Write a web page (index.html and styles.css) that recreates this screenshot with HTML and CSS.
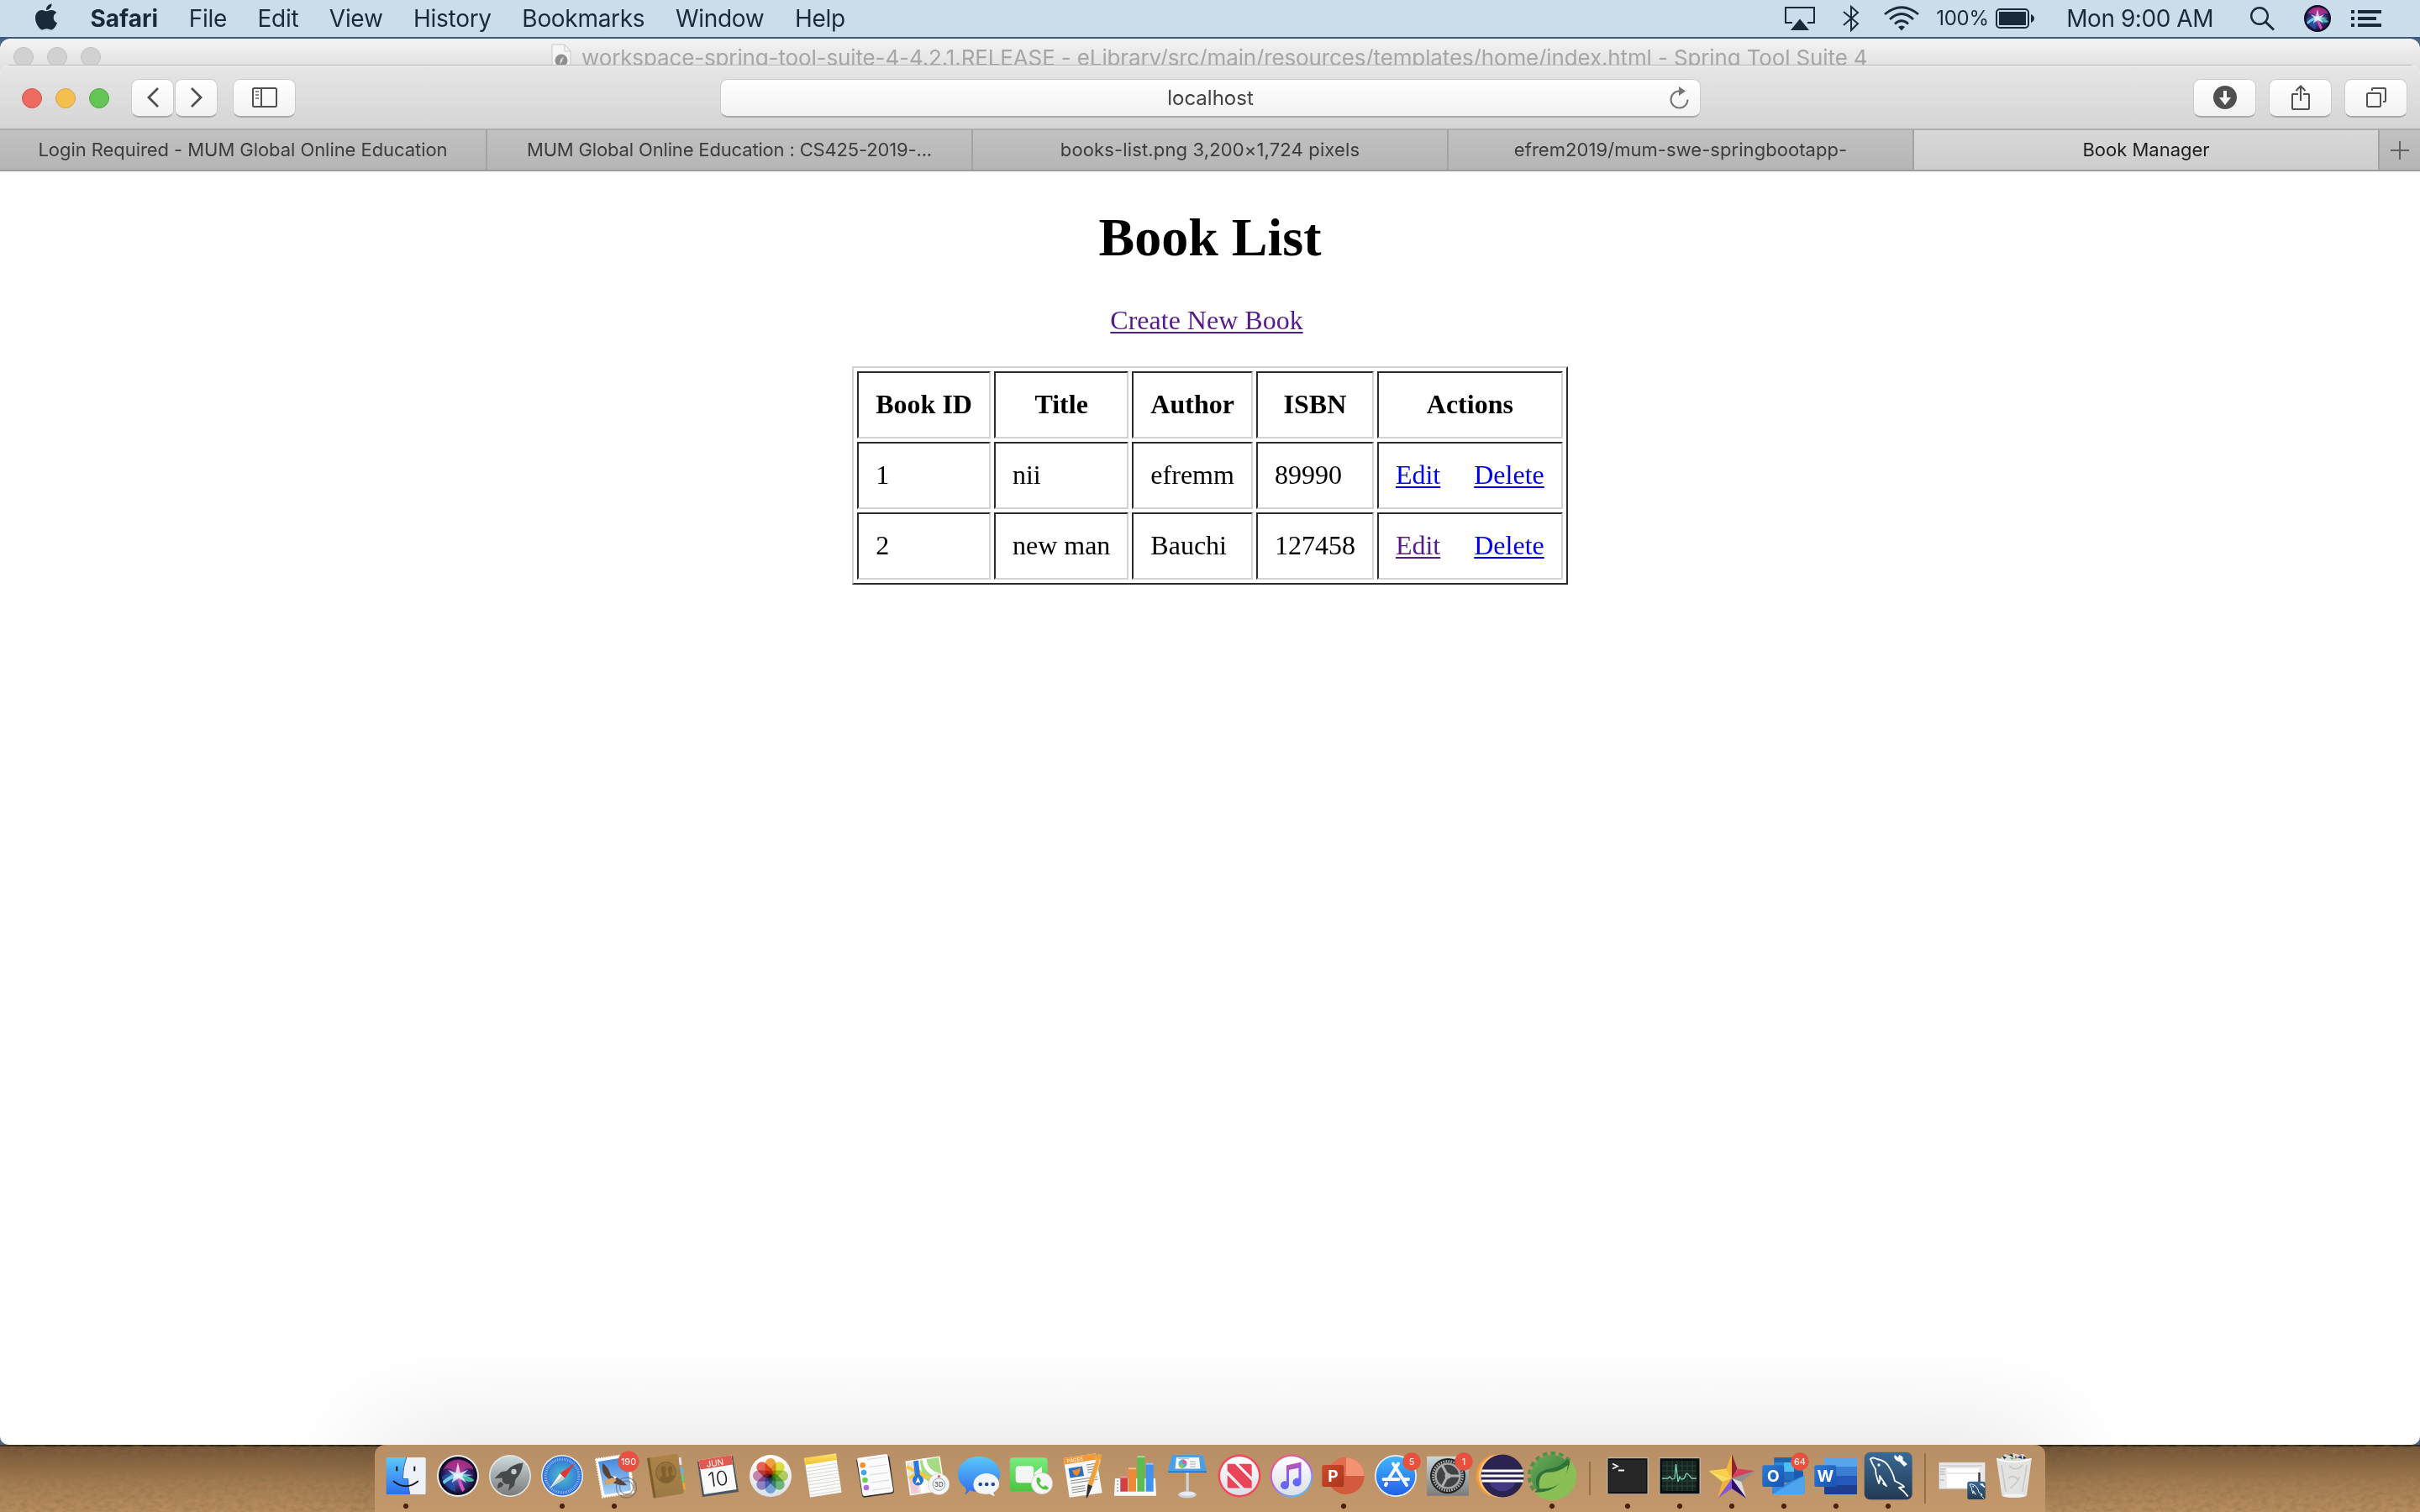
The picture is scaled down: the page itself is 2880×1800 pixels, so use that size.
FILE: index.html
```html
<!DOCTYPE html>
<html lang="en">
<head>
<meta charset="utf-8">
<title>Book Manager</title>
<link rel="stylesheet" href="styles.css">
</head>
<body>
<svg class="defs" width="0" height="0" aria-hidden="true">
  <defs>
    <linearGradient id="blueV" x1="0" y1="0" x2="0" y2="1"><stop offset="0" stop-color="#5bc8f8"/><stop offset="1" stop-color="#2d6df0"/></linearGradient>
    <linearGradient id="blueApp" x1="0" y1="0" x2="0" y2="1"><stop offset="0" stop-color="#3fb8fa"/><stop offset="1" stop-color="#2260ea"/></linearGradient>
    <linearGradient id="whiteV" x1="0" y1="0" x2="0" y2="1"><stop offset="0" stop-color="#fff"/><stop offset="1" stop-color="#dcdfe6"/></linearGradient>
    <linearGradient id="greyV" x1="0" y1="0" x2="0" y2="1"><stop offset="0" stop-color="#cbd9dc"/><stop offset="1" stop-color="#7b7b7b"/></linearGradient>
    <linearGradient id="greenV" x1="0" y1="0" x2="0" y2="1"><stop offset="0" stop-color="#78ec80"/><stop offset="1" stop-color="#4cc43c"/></linearGradient>
    <linearGradient id="tanV" x1="0" y1="0" x2="0" y2="1"><stop offset="0" stop-color="#ad8349"/><stop offset="1" stop-color="#9c7a45"/></linearGradient>
    <linearGradient id="noteV" x1="0" y1="0" x2="0" y2="1"><stop offset="0" stop-color="#fde06b"/><stop offset="1" stop-color="#f3c02c"/></linearGradient>
    <linearGradient id="skyV" x1="0" y1="0" x2="0" y2="1"><stop offset="0" stop-color="#3f86dd"/><stop offset="1" stop-color="#a9d0f5"/></linearGradient>
    <linearGradient id="noteMusic" x1="0" y1="0" x2="0.3" y2="1"><stop offset="0" stop-color="#f0516a"/><stop offset=".5" stop-color="#8a5af0"/><stop offset="1" stop-color="#5a6cf5"/></linearGradient>
    <linearGradient id="ringMusic" x1="0.2" y1="0" x2="0.8" y2="1"><stop offset="0" stop-color="#fa5a6a"/><stop offset=".5" stop-color="#b266e6"/><stop offset="1" stop-color="#4fc6f5"/></linearGradient>
    <linearGradient id="springV" x1="0" y1="0" x2="1" y2="1"><stop offset="0" stop-color="#6aad57"/><stop offset="1" stop-color="#2a6d35"/></linearGradient>
    <linearGradient id="mysqlV" x1="0" y1="0" x2="0" y2="1"><stop offset="0" stop-color="#3b6a96"/><stop offset="1" stop-color="#223b54"/></linearGradient>
    <linearGradient id="pptV" x1="0" y1="0" x2="1" y2="1"><stop offset="0" stop-color="#cb4a2c"/><stop offset="1" stop-color="#a9361c"/></linearGradient>
    <linearGradient id="officeV" x1="0" y1="0" x2="1" y2="1"><stop offset="0" stop-color="#2f7ad6"/><stop offset="1" stop-color="#1554b4"/></linearGradient>
    <radialGradient id="safariR"><stop offset="0" stop-color="#55c3c4"/><stop offset="1" stop-color="#2b6be0"/></radialGradient>
    <radialGradient id="siriR" cx=".5" cy=".5" r=".55"><stop offset="0" stop-color="#9fd8ee"/><stop offset=".3" stop-color="#5a4aa8"/><stop offset=".75" stop-color="#2a1d58"/><stop offset="1" stop-color="#0b0c24"/></radialGradient>
    <symbol id="siri" viewBox="0 0 50 50">
      <circle cx="25" cy="25" r="25" fill="#0c0d25"/>
      <circle cx="25" cy="25" r="22.5" fill="url(#siriR)"/>
      <path d="M6 17Q13 3 28 4Q43 7 45 17Q34 12 26 24Q18 12 6 17z" fill="#c83291" opacity=".75"/>
      <path d="M4 27Q8 41 22 46Q20 34 25 25Q12 18 4 27z" fill="#1d62b8" opacity=".65"/>
      <path d="M25 24Q39 23 46 31Q40 36 25 26z" fill="#41d3ae" opacity=".85"/>
      <path d="M24 25Q26 39 31 46L34 42Q30 35 26 24z" fill="#e35cc0" opacity=".9"/>
      <path d="M5 32Q16 22 25 22L45 24 27 27Q15 28 7 36z" fill="#8ae8ef" opacity=".8"/>
      <path d="M25 7L28 21 38 17 30 25 36 34 26 28 17 34 20 25 12 17 22 21z" fill="#fff" opacity=".75"/>
    </symbol>
    <g id="dolphin" fill="none" stroke="#fff" stroke-linecap="round" stroke-linejoin="round">
      <path d="M10 17Q12 14 18 17Q29 19 33 28Q37 34 39 43Q49 48 50 50L44 51Q51 56 54 61"/>
      <path d="M10 17Q12 23 16 29Q16 35 18 40L20 46Q22 42 21 37Q25 43 29 49L25 46"/>
      <circle cx="20" cy="24" r=".8"/>
    </g>
    <path id="wrench" d="M43 13l4 3 2-3Q55 15 53 19l6 5-4 3-6-6Q43 20 42 15z" fill="#fff"/>
  </defs>
</svg>

<header class="menubar">
  <svg class="apple" viewBox="4 32 376 448"><path fill="#192a3a" d="M318.7 268.7c-.2-36.7 16.4-64.4 50-84.8-18.8-26.9-47.2-41.7-84.7-44.6-35.5-2.8-74.3 20.7-88.5 20.7-15 0-49.4-19.7-76.4-19.7C63.3 141.2 4 184.8 4 273.5q0 39.3 14.4 81.2c12.8 36.7 59 126.7 107.2 125.2 25.2-.6 43-17.9 75.8-17.9 31.8 0 48.3 17.9 76.4 17.9 48.6-.7 90.4-82.5 102.6-119.3-65.2-30.7-61.7-90-61.7-91.9zm-56.6-164.2c27.3-32.4 24.8-61.9 24-72.5-24.1 1.4-52 16.4-67.9 34.9-17.5 19.8-27.8 44.3-25.6 71.9 26.1 2 49.9-11.4 69.5-34.3z"/></svg>
  <nav class="menus">
    <span class="app">Safari</span><span>File</span><span>Edit</span><span>View</span><span>History</span><span>Bookmarks</span><span>Window</span><span>Help</span>
  </nav>
  <div class="status">
    <svg class="airplay" width="36" height="28" viewBox="0 0 36 28"><path d="M9 19H1V1h34v18h-8" fill="none" stroke="#192a3a" stroke-width="2"/><path d="M18 14.5L29 28H7z" fill="#192a3a"/></svg>
    <svg class="bluetooth" width="20" height="32" viewBox="0 0 20 32"><path d="M1 8l17 14-8 8V2l8 7L1 24" fill="none" stroke="#192a3a" stroke-width="2"/></svg>
    <svg class="wifi" width="42" height="30" viewBox="0 0 42 30"><g fill="none" stroke="#192a3a" stroke-width="2.8"><path d="M1 10Q21-6.500 41 10"/><path d="M7 16Q21 3 35 16"/><path d="M13 21.500Q21 14 29 21.500"/></g><path d="M17 25Q21 22 25 25L21 29.500z" fill="#192a3a"/></svg>
    <span class="pct">100%</span>
    <svg class="battery" width="46" height="24" viewBox="0 0 46 24"><rect x="1" y="1" width="38" height="22" rx="4" fill="none" stroke="#192a3a" stroke-width="2"/><rect x="4" y="4" width="32" height="16" fill="#192a3a"/><path d="M42 7q4 2 4 5t-4 5z" fill="#192a3a"/></svg>
    <span class="clock">Mon 9:00 AM</span>
    <svg class="search" width="29" height="29" viewBox="0 0 29 29"><circle cx="11" cy="11" r="9.800" fill="none" stroke="#192a3a" stroke-width="2.400"/><path d="M18 18l10 9.500" stroke="#192a3a" stroke-width="3"/></svg>
    <svg class="siri" width="32" height="32"><use href="#siri"/></svg>
    <svg class="list" width="36" height="20" viewBox="0 0 36 20"><path d="M0 0h4v4H0zM0 8h4v4H0zM0 16h4v4H0zM8 0h28v4H8zM8 8h22v4H8zM8 16h28v4H8z" fill="#192a3a"/></svg>
  </div>
</header>

<main class="desktop">
  <div class="backwin">
    <i></i><i></i><i></i>
    <svg class="doc" width="24" height="32" viewBox="0 0 24 32"><path d="M1 34V1h15l7 8v25" fill="#f5f5f5" stroke="#c8c8c8"/><path d="M16 1v8h7" fill="none" stroke="#c8c8c8"/><circle cx="12" cy="20" r="7.500" fill="#8f8f8f"/><path d="M10 25l1-6 4-4-2 6z" fill="#ddd"/></svg>
    <span class="wtitle">workspace-spring-tool-suite-4-4.2.1.RELEASE - eLibrary/src/main/resources/templates/home/index.html - Spring Tool Suite 4</span>
  </div>

  <section class="window">
    <div class="toolbar">
      <i class="light red"></i><i class="light amber"></i><i class="light green"></i>
      <span class="btn nav back"><svg width="16" height="26" viewBox="0 0 16 26"><path d="M14 2L3 13l11 11" fill="none" stroke="#505050" stroke-width="2.800"/></svg></span>
      <span class="btn nav"><svg width="16" height="26" viewBox="0 0 16 26"><path d="M2 2l11 11L2 24" fill="none" stroke="#505050" stroke-width="2.800"/></svg></span>
      <span class="btn side"><svg width="30" height="24" viewBox="0 0 30 24"><rect x="1" y="1" width="28" height="22" rx="1.500" fill="none" stroke="#505050" stroke-width="2"/><path d="M11 1v22" stroke="#505050" stroke-width="2"/><path d="M4 5h4M4 9h4M4 13h4" stroke="#8a8a8a" stroke-width="2"/></svg></span>
      <div class="address"><span class="host">localhost</span>
        <svg class="reload" width="24" height="28" viewBox="0 0 24 28"><path d="M21.500 15.500A10 10 0 1 1 11 5.500" fill="none" stroke="#757575" stroke-width="2"/><path d="M11 0v11l8-5.500z" fill="#757575"/></svg></div>
      <span class="btn wide first"><svg width="28" height="28" viewBox="0 0 28 28"><circle cx="14" cy="14" r="14" fill="#505050"/><path d="M12 6h4v8h5l-7 9-7-9h5z" fill="#fafafa"/></svg></span>
      <span class="btn wide"><svg width="22" height="30" viewBox="0 0 22 30"><path d="M8 11H1.500q-.5 0-.5.500V28q0 1 1 1h18q1 0 1-1V11.500q0-.5-.5-.5H14M11 19V1.500M5.500 7L11 1.500 16.500 7" fill="none" stroke="#505050" stroke-width="2"/></svg></span>
      <span class="btn wide"><svg width="24" height="24" viewBox="0 0 24 24"><rect x="1" y="7" width="16" height="16" rx="1.500" fill="none" stroke="#505050" stroke-width="2"/><path d="M7 4V2q0-1 1-1h14q1 0 1 1v14q0 1-1 1h-2" fill="none" stroke="#505050" stroke-width="2"/></svg></span>
    </div>
    <div class="tabs">
      <span class="tab t1">Login Required - MUM Global Online Education</span>
      <span class="tab t2">MUM Global Online Education : CS425-2019-...</span>
      <span class="tab t3">books-list.png 3,200×1,724 pixels</span>
      <span class="tab t4">efrem2019/mum-swe-springbootapp-</span>
      <span class="tab active">Book Manager</span>
      <span class="tab plus"><svg width="22" height="22" viewBox="0 0 22 22"><path d="M11 0v22M0 11h22" stroke="#606060" stroke-width="2"/></svg></span>
    </div>
    <article class="page">
      <h1>Book List</h1>
      <p class="create"><a class="visited" href="#">Create New Book</a>&nbsp;</p>
      <table class="books">
        <tr><th>Book ID</th><th>Title</th><th>Author</th><th>ISBN</th><th>Actions</th></tr>
        <tr><td>1</td><td>nii</td><td>efremm</td><td>89990</td><td><a href="#">Edit</a>&nbsp;&nbsp;&nbsp;&nbsp;&nbsp;<a href="#">Delete</a></td></tr>
        <tr><td>2</td><td>new man</td><td>Bauchi</td><td>127458</td><td><a class="visited" href="#">Edit</a>&nbsp;&nbsp;&nbsp;&nbsp;&nbsp;<a href="#">Delete</a></td></tr>
      </table>
    </article>
  </section>

  <footer class="shelf">
    <svg class="sand" width="2880" height="80"><filter id="grain" x="0" y="0" width="1" height="1"><feTurbulence type="fractalNoise" baseFrequency=".12 .2" numOctaves="3"/><feColorMatrix values="0 0 0 0 .25  0 0 0 0 .15  0 0 0 0 .05  .9 0 0 0 -.32"/></filter><rect width="2880" height="80" filter="url(#grain)"/></svg>
    <div class="dock">
      <svg class="ic run" viewBox="0 0 62 80"><rect x="7.700" y="15" width="47" height="44" rx="1.500" fill="url(#blueV)"/><path d="M31.700 15Q27.500 26 27.300 40.500H33.700Q33.500 50 35.700 59H53.200a1.500 1.500 0 0 0 1.500-1.500V16.500a1.500 1.500 0 0 0-1.500-1.500z" fill="#eef1f8"/><path d="M31.700 15Q27.500 26 27.300 40.500H33.700Q33.500 50 35.700 59" fill="none" stroke="#1c4f8c" stroke-width=".8"/><path d="M20.300 26.500v4M41.300 26.500v4" stroke="#10151c" stroke-width="2" stroke-linecap="round"/><path d="M16.500 43.500Q31 55 45.300 43.500" fill="none" stroke="#10151c" stroke-width="1.700" stroke-linecap="round"/></svg>
      <svg class="ic" viewBox="0 0 62 80"><circle cx="31" cy="37" r="25" fill="#eceef0"/><use href="#siri" x="8" y="14" width="46" height="46"/></svg>
      <svg class="ic" viewBox="0 0 62 80"><circle cx="31" cy="37" r="25" fill="#e4e8e9"/><circle cx="31" cy="37" r="23.500" fill="url(#greyV)"/><path d="M46.500 21.500Q34 22.500 27 31L20 32.500 12.500 40 21.500 39.500 22 44 26 47 30.500 46.500 29 55 36 48.500 37.500 41Q45 34 46.500 21.500z" fill="#46484b"/><circle cx="35.500" cy="32" r="3.200" fill="#c3cbcd"/><path d="M19.500 44Q16 46 16 52Q21 51 23.500 47" fill="#46484b"/></svg>
      <svg class="ic run" viewBox="0 0 62 80"><circle cx="31" cy="37" r="25" fill="#eef0f2"/><circle cx="31" cy="37" r="23.500" fill="url(#safariR)"/><circle cx="31" cy="37" r="20" fill="none" stroke="#e7f2fb" stroke-width="3.400" stroke-dasharray=".7 1.390" opacity=".7"/><path d="M46 22L34 40 28.500 34z" fill="#e8332f"/><path d="M16 52L28.500 34 34 40z" fill="#f3f5f6"/><path d="M16 52L31 37l3 3z" fill="#c5cacc"/></svg>
      <svg class="ic run" viewBox="0 0 62 80"><path d="M9 17L48.500 11 54 57 17 62.500z" fill="#fff" stroke="#fff" stroke-width="2" stroke-dasharray="1.800 1.200"/><path d="M12 20L46 14.500 51 54.500 19.500 59.500z" fill="url(#skyV)"/><path d="M17 22Q24 26 27 37Q40 40 46 48Q35 49 28 44L20 46 24 40Q15 34 17 22z" fill="#5c4030"/><path d="M20 42l9-3 5 3-5 4-8 2z" fill="#d3a566"/><path d="M29 37l5 1-2 3z" fill="#fff"/><g fill="none" stroke="#57626f" stroke-width="1.300" opacity=".6"><circle cx="45.500" cy="51" r="12"/><circle cx="45.500" cy="51" r="8"/></g><circle cx="48" cy="20" r="12.500" fill="#e8503f"/><text class="badge" x="48" y="23.800">190</text></svg>
      <svg class="ic" viewBox="0 0 62 80"><path d="M46 15h2.500l1 9H46z" fill="#e5e5e5"/><path d="M47 26h3l1.500 8H47z" fill="#5fb8e8"/><path d="M48 35h3.500l1 9H49z" fill="#65cf73"/><path d="M49 45h4l1 8H49z" fill="#f3a32b"/><path d="M8 16L42 10.700Q44.500 10.500 45 13L51.500 55Q52 57.500 49 58.500L18 63.500Q15.500 64 15 61z" fill="url(#tanV)"/><path d="M8 16l3-.5L18.500 62.500 16 63.500z" fill="#7b5c2d"/><ellipse cx="30.500" cy="33" rx="12" ry="12.500" fill="#99733c" stroke="#7f5f31"/><path d="M22 40Q27 38 26 34Q22 26 28 25Q32 26 30 34L31 38Q35 39 34 34Q31 26 36 25Q40 27 37 33Q36 36 41 37Q36 45 31 45Q25 45 22 40z" fill="#826130"/></svg>
      <svg class="ic" viewBox="0 0 62 80"><path d="M6 20L48 13 55 56 12 62z" fill="#4b5660"/><path d="M7.500 18.500L46.300 12.300 52.500 53 14 59z" fill="#fafafa"/><path d="M7.500 18.500L46.300 12.300 48 23.500 9.500 29.500z" fill="#e2594f"/><g transform="rotate(-8 30 37)" text-anchor="middle"><text class="calm" x="29" y="25">JUN</text><text class="cald" x="30" y="49">10</text></g></svg>
      <svg class="ic" viewBox="0 0 62 80"><circle cx="31" cy="37" r="25" fill="url(#whiteV)"/><g class="petals"><rect x="24.500" y="16" width="13" height="22" rx="6.500" fill="#f49a2e"/><rect x="24.500" y="16" width="13" height="22" rx="6.500" fill="#e6e02f" transform="rotate(45 31 37)"/><rect x="24.500" y="16" width="13" height="22" rx="6.500" fill="#b5d653" transform="rotate(90 31 37)"/><rect x="24.500" y="16" width="13" height="22" rx="6.500" fill="#6dc07d" transform="rotate(135 31 37)"/><rect x="24.500" y="16" width="13" height="22" rx="6.500" fill="#74aee8" transform="rotate(180 31 37)"/><rect x="24.500" y="16" width="13" height="22" rx="6.500" fill="#9382cc" transform="rotate(225 31 37)"/><rect x="24.500" y="16" width="13" height="22" rx="6.500" fill="#cf7fac" transform="rotate(270 31 37)"/><rect x="24.500" y="16" width="13" height="22" rx="6.500" fill="#ee5548" transform="rotate(315 31 37)"/></g></svg>
      <svg class="ic" viewBox="0 0 62 80"><path d="M9 17L47 11.500 54 57 15.700 63z" fill="#fbfbf9" stroke="#a98a60" stroke-width=".6"/><path d="M8.700 15.700L47 10.300 48.200 18 10 24z" fill="url(#noteV)"/><path d="M11 28l38-6M11.500 32l38-6M12 36l38-6M12.700 40l38-6M13.300 44l38-6M14 48l38-6M14.500 52l38-6M15 56l38-6M15.700 60l37.500-6" stroke="#cfcfcf" stroke-width=".8"/></svg>
      <svg class="ic" viewBox="0 0 62 80"><path d="M9 18L46 13Q48 13 48.500 15L54 55Q54 57 52 58L19 62.700Q16.500 63 16 60z" fill="#2e2e2e"/><path d="M10 17Q10 16 12 15.500L44 11Q46 11 46.500 13L53 54Q53 56 51 56.500L19 61Q17 61 16.500 59z" fill="#fbfbfb"/><path d="M22 17.500l22-3M23.500 26.500l22-3M25 36l22-3M26.500 45l22-3M28 54l22-3" stroke="#d8d8d8"/><circle cx="16.700" cy="24.300" r="3.300" fill="#f28e2c"/><circle cx="18" cy="33" r="3.300" fill="#41a5f0"/><circle cx="19.500" cy="42" r="3.300" fill="#6bd04a"/><circle cx="21" cy="51" r="3.300" fill="#b36bdb"/></svg>
      <svg class="ic" viewBox="0 0 62 80"><path d="M5.300 19.500L46.500 13.500 53 54 11 60.500z" fill="#faf8f2"/><path d="M7 21L21 19 27 57 12.500 59z" fill="#e9e5db"/><path d="M20 19L45 15 50 44 45 52 22 36z" fill="#a6db83"/><path d="M28 16Q29 34 49 37M20 18l7 40" fill="none" stroke="#fff" stroke-width="5"/><path d="M7 26L30 38 50 44M10 40L24 31" stroke="#f8c73d" stroke-width="4" fill="none"/><path d="M10 40l10 5 1 12-8 1z" fill="#f1c8d3"/><path d="M15 19.500l6-1 2 19h-6z" fill="#2f79dc"/><circle cx="20.500" cy="42" r="6.500" fill="#2676d5"/><path d="M20.500 38l3 8-3-2-3 2z" fill="#fff"/><circle cx="45.300" cy="47" r="12.500" fill="#f7f7f7" stroke="#c9c9c9" stroke-width=".6"/><circle cx="45.300" cy="47" r="7.300" fill="none" stroke="#79a7c4"/><circle cx="45.300" cy="37.500" r="1.300" fill="#e22"/><text class="tiny" x="45.300" y="49.800">3D</text></svg>
      <svg class="ic" viewBox="0 0 62 80"><path d="M31 14C45 14 56 23 56 35S45 56 31 56Q24 56 20 54Q18 58 14 59Q17 55 15 51Q6 45 6 35C6 23 17 14 31 14z" fill="url(#blueV)"/><path d="M40 34C48 34 55 39 55 46.500Q55 53 48 57L50 61Q46 60 44 58.500Q24 60 24.500 46.500C25 39 32 34 40 34z" fill="#f2f6fb"/><g fill="#1d4e98"><circle cx="32.700" cy="47" r="2.300"/><circle cx="40.200" cy="47" r="2.300"/><circle cx="47.800" cy="47" r="2.300"/></g></svg>
      <svg class="ic" viewBox="0 0 62 80"><rect x="5.700" y="15.300" width="45" height="40" rx="4" fill="url(#greenV)"/><rect x="12.700" y="25.300" width="21.500" height="20" rx="4" fill="#f3f6f3"/><path d="M35 33L44 26v18l-9-6z" fill="#f3f6f3"/><circle cx="44" cy="46" r="12.700" fill="#f5f5f5" stroke="#b8c7b4" stroke-width=".5"/><path d="M38 39l3 0 2 4-2 2Q42 49 46 50l2-2 4 3-1 2Q46 55 41 50T38 39z" fill="#55c548"/></svg>
      <svg class="ic" viewBox="0 0 62 80"><path d="M7.700 16L46 10.300 53.700 57.300 14.700 62.700z" fill="#f7f7f5"/><path d="M7.700 16L46 10.300 47 17.500 9 23.500z" fill="#f19a38"/><text class="pages" x="12" y="21.500" transform="rotate(-8 12 21)">PAGES</text><path d="M13.500 28L30 25.500 32 37 15.500 39.500z" fill="#2c6ec4"/><path d="M18 30q5 1 10-3-1 9-5 10-4-2-5-7z" fill="#f38a1e"/><path d="M35 24l10-1.500M35.500 27l10-1.500M36 30l10-1.500M36.500 33l10-1.500M16 43l32-5M16.500 46l32-5M17 51l16-2.500M17.500 54l16-2.500M18 57l16-2.500" stroke="#888" stroke-width="1"/><path d="M49 10.500l4.500 1.300L42 49l-5.500-2z" fill="#f0a23a"/><path d="M49.500 18l2 .7-8 27" fill="none" stroke="#fbd28d"/><path d="M36.500 47l5.500 2-5.500 13-2 2z" fill="#2d2d2d"/></svg>
      <svg class="ic" viewBox="0 0 62 80"><path d="M7 40h48l1 20.700H6z" fill="#f8f8f8"/><path d="M9 43h2M9 47h2M9 51h2M9 55h2" stroke="#777"/><rect x="13.300" y="37.700" width="9" height="18" fill="#d24045"/><rect x="23" y="27.300" width="9" height="28.400" fill="#ee8a35"/><rect x="33.300" y="13.300" width="9" height="42.400" fill="#5dbb50"/><rect x="43.700" y="21.700" width="9" height="34" fill="#3d93ee"/><path d="M13.300 38.500h9M23 28.300h9M33.300 14.300h9M43.700 22.700h9" stroke="#fff" stroke-opacity=".45" stroke-width="2"/></svg>
      <svg class="ic" viewBox="0 0 62 80"><rect x="29.500" y="32" width="3.200" height="27" fill="#cfd4da"/><ellipse cx="31" cy="59.300" rx="11" ry="4" fill="#c9d1db"/><ellipse cx="31" cy="58.300" rx="9" ry="2.500" fill="#e8ecf1"/><path d="M13 12.300h36.500L54 31.500H8z" fill="#4a9fe9"/><path d="M8 31.500h46v1.500H8z" fill="#2a6cb8"/><path d="M18 15h27l1.500 13.500H16.500z" fill="#f6f8fa"/><circle cx="25.500" cy="22.500" r="5" fill="#47b5e4"/><path d="M25.500 22.500v-5a5 5 0 0 1 5 5z" fill="#dd5c94"/><path d="M25.500 22.500l-5 1a5 5 0 0 0 7 4z" fill="#8ac645"/><path d="M20 16.300h13M34 20h7M34 23h7M34 26h7" stroke="#999" stroke-width=".8"/></svg>
      <svg class="ic" viewBox="0 0 62 80"><circle cx="31" cy="37" r="25.500" fill="#f04a5c"/><circle cx="31" cy="37" r="23" fill="url(#whiteV)"/><path d="M16.700 22.700h9L45.700 43v8.500h-9L16.700 31z" fill="#e9455a"/><path d="M30 22.700h13.700a2 2 0 0 1 2 2V38.500zM16.700 36L32 51.500H18.700a2 2 0 0 1-2-2z" fill="#e9455a"/></svg>
      <svg class="ic" viewBox="0 0 62 80"><circle cx="31" cy="37" r="25.500" fill="url(#ringMusic)"/><circle cx="31" cy="37" r="23.300" fill="url(#whiteV)"/><path d="M25 24.500L42.500 20.500V44A5 5 0 1 1 39.500 40V27.500L28 30V47.500A5 5 0 1 1 25 43.500z" fill="url(#noteMusic)"/></svg>
      <svg class="ic run" viewBox="0 0 62 80"><circle cx="33.700" cy="37" r="22" fill="#d35a3c"/><path d="M33.700 15a22 22 0 0 1 22 22h-22z" fill="#f39272"/><path d="M33.700 15v22h-22a22 22 0 0 1 22-22z" fill="#e26d4c"/><rect x="5.300" y="24" width="26" height="26" rx="2" fill="url(#pptV)"/><text class="office" x="18.300" y="44">P</text></svg>
      <svg class="ic" viewBox="0 0 62 80"><circle cx="31" cy="37" r="25" fill="#eceff2"/><circle cx="31" cy="37" r="23.300" fill="url(#blueApp)"/><path d="M28 22.500L44 48M34 22.500L22.500 41M16.500 41h18M39.500 41H46M20 46l-1 2" fill="none" stroke="#f3f8fd" stroke-width="4" stroke-linecap="round"/><circle cx="50" cy="20" r="10.700" fill="#e8503f"/><text class="badge" x="50" y="23.800">5</text></svg>
      <svg class="ic" viewBox="0 0 62 80"><rect x="6" y="13.700" width="50" height="47" rx="1" fill="url(#greyV)"/><circle cx="31" cy="37" r="21" fill="#1f2022"/><circle cx="31" cy="37" r="17.500" fill="none" stroke="#a4a6a8" stroke-width="3" stroke-dasharray="1.800 1.250"/><circle cx="31" cy="37" r="14.500" fill="#404244" stroke="#a4a6a8" stroke-width="2.600"/><path d="M31 37L24 24M31 37h15M31 37L24 50" stroke="#b0b0b0" stroke-width="3"/><circle cx="31" cy="37" r="3.500" fill="#b0b0b0"/><circle cx="50" cy="20" r="10.700" fill="#e8503f"/><text class="badge" x="50" y="23.800">1</text></svg>
      <svg class="ic" viewBox="0 0 62 80"><circle cx="28" cy="37" r="25.500" fill="#f39a38"/><circle cx="31" cy="37" r="25.500" fill="#f7c07a"/><circle cx="34" cy="37" r="25.500" fill="#2b2350"/><path d="M18 44a17 17 0 0 0 32 0z" fill="#423780"/><path d="M9.300 31h49.500M8.500 37h51M9.300 43h49.500" stroke="#fff" stroke-width="2.900"/></svg>
      <svg class="ic run" viewBox="0 0 62 80"><circle cx="31" cy="37" r="25" fill="url(#springV)"/><path d="M52 19A27 27 0 0 0 11 56" fill="none" stroke="#4f9147" stroke-width="4" stroke-dasharray="5.500 4.200"/><path d="M53 18A28.500 28.500 0 0 1 10 56.500Q44 58 53 18z" fill="#8abf55"/><path d="M10 56.500Q44 58 52.500 20L49 17Q42 26 30 28Q13 31 12 42 11 48 15 52z" fill="#2f713a"/><path d="M16 52Q14 36 24 33Q40 33 50 24Q48 44 33 50Q24 53 16 52z" fill="#8abf55"/></svg>
      <i class="sep s1"></i>
      <svg class="ic run" viewBox="0 0 62 80"><rect x="6.300" y="15" width="49.500" height="44" rx="1.500" fill="#b9b6b0"/><rect x="7.500" y="16.200" width="47" height="42" fill="#111"/><rect x="9" y="18" width="44" height="38" fill="#262626"/><path d="M13 22.500l6 3-6 3M20 30.500h7" fill="none" stroke="#f4f4f4" stroke-width="1.800"/></svg>
      <svg class="ic run" viewBox="0 0 62 80"><rect x="6.300" y="15" width="49.500" height="44" rx="1.500" fill="#b9b6b0"/><rect x="7.500" y="16.200" width="47" height="42" fill="#0c0d0d"/><rect x="10" y="19" width="41" height="36" fill="#17251f"/><path d="M10 25h41M10 31h41M10 37h41M10 43h41M10 49h41M16 19v36M22 19v36M28 19v36M34 19v36M40 19v36M46 19v36" stroke="#2f5146" stroke-width=".7"/><path d="M10 40h7l2-2 3 3 3-1 1.500-17L29 44l2-6 2 3q4 0 5-5t7 4l6 0" fill="none" stroke="#7fd2b6" stroke-width="1.300"/></svg>
      <svg class="ic run" viewBox="0 0 62 80"><path d="M31 10.700L24.500 28.500 31 40z" fill="#f5b83b"/><path d="M31 10.700L37.500 28.500 31 40z" fill="#8e2138"/><path d="M58.700 31L37.500 28.500 31 40z" fill="#d9405c"/><path d="M58.700 31L42.300 44 31 40z" fill="#8f8f8f"/><path d="M48.300 63.700L42.300 44 31 40z" fill="#dcdcdc"/><path d="M48.300 63.700L31 52V40z" fill="#2a0a6c"/><path d="M14 63.700L31 52V40z" fill="#8257d8"/><path d="M14 63.700L19.700 44 31 40z" fill="#f0b237"/><path d="M3.300 31L19.700 44 31 40z" fill="#fbdc62"/><path d="M3.300 31L24.500 28.500 31 40z" fill="#fbcf4c"/></svg>
      <svg class="ic run" viewBox="0 0 62 80"><rect x="19.300" y="15" width="34" height="30" rx="1" fill="#1f66b0"/><path d="M19.300 21h12v11h-12z" fill="#2a8ae0"/><path d="M31 21h12v11H31z" fill="#4fc0f2"/><path d="M31 32h12v10H31z" fill="#2370c2"/><path d="M43 32h11v10H43z" fill="#1b5cae"/><path d="M17 36l14 11 24.500-10.500V57a2 2 0 0 1-2 2H19a2 2 0 0 1-2-2z" fill="#3788e0"/><path d="M17 59L55.500 36.500V57a2 2 0 0 1-2 2z" fill="#4ea5ee"/><rect x="5.300" y="24.300" width="26" height="25.700" rx="2" fill="url(#officeV)"/><text class="office" x="18.300" y="44">O</text><circle cx="50" cy="20" r="10.700" fill="#e8503f"/><text class="badge" x="50" y="23.800">64</text></svg>
      <svg class="ic run" viewBox="0 0 62 80"><rect x="17" y="15" width="39" height="44" rx="1.500" fill="#5aa4ec"/><path d="M17 26h39v11H17z" fill="#3c7dd4"/><path d="M17 37h39v11H17z" fill="#2659bb"/><path d="M17 48h39v9.500a1.500 1.500 0 0 1-1.500 1.500h-36a1.500 1.500 0 0 1-1.500-1.500z" fill="#1b3f8e"/><rect x="5.300" y="24.300" width="26" height="25.700" rx="2" fill="url(#officeV)"/><text class="office" x="18.300" y="44">W</text></svg>
      <svg class="ic run" viewBox="0 0 62 80"><rect x="2.700" y="8.700" width="57" height="56.600" rx="7" fill="url(#mysqlV)"/><use href="#dolphin" stroke-width="1.800"/><use href="#wrench" transform="translate(-1 -1) scale(.93 1)"/></svg>
      <i class="sep s2"></i>
      <svg class="ic" viewBox="0 0 62 80"><rect x="3.700" y="21" width="54.600" height="31.700" fill="#e9e9e9" stroke="#b8b8b8" stroke-width=".5"/><path d="M13 28h38v5H13zM13 35h38v16H13z" fill="#fff"/><path d="M5 25h50" stroke="#bdbdbd"/><path d="M5 29h6M5 32h5M5 35h6M5 42h5" stroke="#aaa"/><path d="M51.500 33v12" stroke="#3c3c3c" stroke-width="2.500"/><rect x="37.300" y="43.700" width="21.500" height="21.300" rx="2.500" fill="url(#mysqlV)"/><g transform="translate(36.500 40.800) scale(.375)"><use href="#dolphin" stroke-width="2.500"/><use href="#wrench"/></g></svg>
      <svg class="ic" viewBox="0 0 62 80"><path d="M14 17l6-6 5 2 5-3 7 2 5-1 6 7-17 4z" fill="#d9dcdd"/><path d="M17 13l5 2-3 2zM25 12l4-1 1 4zM35 15l4-2 2 4zM42 13l4 3-4 1z" fill="#222"/><path d="M26 15l5 1-3 2z" fill="#58b55d"/><path d="M32 13l4 2-4 2z" fill="#d06a48"/><path d="M37 12l4 1-2 2z" fill="#4879c8"/><path d="M10 16.500Q31 24 51.700 16.500L46 60Q45.500 63 31 63T16.300 60z" fill="#e2e2e0"/><path d="M10 16.500Q31 24 51.700 16.500" fill="none" stroke="#fff" stroke-width="1.500"/><path d="M16 24l5 32M46 24l-5 32M25 25q8 8 16-1M24 40q6-6 12 2M26 52q8-6 12-14" fill="none" stroke="#c6c6c4" stroke-width="1.500"/><ellipse cx="31" cy="60.500" rx="13" ry="2" fill="#f3f3f2"/></svg>
    </div>
  </footer>
</main>
</body>
</html>
```
FILE: styles.css
```css
* { box-sizing: border-box; }
html, body { margin: 0; width: 2880px; height: 1800px; overflow: hidden; }
body { display: flex; flex-direction: column; background: #4a6489; font-family: Inter, "Liberation Sans", sans-serif; }
svg { display: block; flex: none; overflow: visible; }
.defs { position: absolute; }

.menubar { display: flex; align-items: center; height: 46px; flex: none; padding: 0 46px 0 42px; background: #cbdceb; border-bottom: 2px solid #3f587f; color: #192a3a; font-size: 28px; line-height: 44px; letter-spacing: -.3px; white-space: nowrap; }
.apple { width: 26px; height: 32px; margin-top: -4px; }
.menus { display: flex; gap: 36.6px; margin-left: 39.5px; }
.app { font-weight: 700; letter-spacing: 0; }
.status { display: flex; align-items: center; margin-left: auto; }
.bluetooth { margin-left: 33px; }
.wifi { margin-left: 29px; }
.pct { margin-left: 20.5px; font-size: 24px; }
.battery { margin-left: 8.5px; }
.clock { margin-left: 38px; letter-spacing: -.45px; }
.search { margin-left: 44px; }
.siri { margin-left: 35px; }
.list { margin-left: 24px; }

.desktop { display: flex; flex-direction: column; flex: 1; min-height: 0; }
.backwin { display: flex; align-items: flex-start; height: 44px; flex: none; padding: 0 0 0 16px; border-radius: 12px 12px 0 0; background: linear-gradient(#f4f4f4, #e2e2e2 32px); }
.backwin i { width: 24px; height: 24px; margin: 10px 16px 0 0; border-radius: 50%; background: #d1d1d1; border: 1px solid #c2c2c2; }
.doc { margin: 6px 0 0 520px; }
.wtitle { margin-left: 12px; font-size: 26px; line-height: 46px; letter-spacing: -.135px; color: #a6a6a6; white-space: nowrap; }

.window { position: relative; display: flex; flex-direction: column; height: 1643px; margin-top: -13px; flex: none; overflow: hidden; border-radius: 12px 12px 10px 10px; background: #fff; }
.toolbar { display: flex; align-items: center; height: 76px; flex: none; padding: 2px 15px 0 26px; border-top: 1px solid #b4b4b4; background: linear-gradient(#e6e6e6, #d5d5d5); box-shadow: inset 0 1px #f4f4f4; }
.light { width: 24px; height: 24px; margin-right: 16px; border-radius: 50%; flex: none; border: 1px solid; }
.red { background: #ee6a5f; border-color: #d9544b; }
.amber { background: #f5bf4f; border-color: #dca23c; }
.green { background: #62c554; border-color: #4fa93f; }
.btn, .address { display: flex; align-items: center; justify-content: center; height: 46px; flex: none; border: 1px solid #cbcbcb; border-bottom: 2px solid #aaa; border-radius: 9px; background: linear-gradient(#fff, #f2f2f2); }
.nav { width: 51px; margin-right: 1px; }
.back { margin-left: 10px; }
.side { width: 75px; margin-left: 17px; }
.address { position: relative; width: 1167px; margin-left: 505px; font-size: 24px; color: #414141; }
.reload { position: absolute; right: 12px; top: 8px; }
.wide { width: 75px; margin-left: 15px; }
.first { margin-left: auto; }

.tabs { display: flex; height: 51px; flex: none; border-top: 2px solid #adadad; border-bottom: 2px solid #9d9d9d; background: linear-gradient(#c1c1c1, #b5b5b5); font-size: 22px; color: #3c3c3c; }
.tab { display: flex; align-items: center; justify-content: center; padding-bottom: 1px; border-right: 2px solid #a3a3a3; white-space: nowrap; }
.t1 { width: 580px; letter-spacing: -.06px; }
.t2 { width: 578px; letter-spacing: -.16px; }
.t3 { width: 566px; letter-spacing: .14px; }
.t4 { width: 554px; letter-spacing: .05px; }
.active { width: 554px; background: linear-gradient(#d8d8d8, #cdcdcd); color: #1e1e1e; }
.plus { flex: 1; padding: 0; border-right: 0; }

.page { flex: 1; font: 32px/36px "Liberation Serif", "Times New Roman", serif; color: #000; }
h1 { margin: 42px 0 43px; font-size: 64px; line-height: 74px; text-align: center; }
.create { margin: 0 0 37px; text-align: center; }
a { color: #0000ee; text-underline-offset: 3px; text-decoration-thickness: 2px; text-decoration-skip-ink: none; }
.visited { color: #551a8b; }
.books { margin: 0 auto; border: 2px solid; border-color: #d3d3d3 #2b2b2b #2b2b2b #d3d3d3; border-collapse: separate; border-spacing: 4px; }
.books th, .books td { height: 80px; padding: 19px 20px 21px; border: 2px solid; border-color: #2b2b2b #d3d3d3 #d3d3d3 #2b2b2b; white-space: nowrap; }

.shelf { position: relative; display: flex; justify-content: center; height: 80px; flex: none; background: linear-gradient(#6c5136, #a37b52 45px, #b98e60); box-shadow: inset 0 2px #2f2418; }
.sand { position: absolute; left: 0; top: 0; overflow: hidden; }
.dock { position: relative; display: flex; width: 1988px; height: 80px; padding: 0 6px; border-radius: 12px 12px 0 0; background: linear-gradient(#b88f66, #c3986b); box-shadow: 0 0 130px rgba(0, 0, 0, .16); }
.ic { width: 62px; height: 80px; }
.run { background: radial-gradient(circle at 31px 73px, #4c1f06 2.6px, transparent 3.6px); }
.sep { position: relative; align-self: center; width: 2px; background: #97703f; flex: none; }
.s1 { height: 40px; margin: 0 13px; }
.s2 { height: 60px; margin: 0 12px; }
.ic text { font-family: Inter, "Liberation Sans", sans-serif; }
.ic .badge { font-size: 11px; fill: #fff; text-anchor: middle; }
.ic .office { font-size: 19px; font-weight: 700; fill: #fff; text-anchor: middle; }
.ic .calm { font-size: 10px; fill: #fff; }
.ic .cald { font-size: 24px; font-weight: 300; fill: #222; }
.ic .tiny { font-size: 8px; fill: #444; text-anchor: middle; }
.ic .pages { font-size: 6px; fill: #fff; }
.petals rect { mix-blend-mode: multiply; opacity: .9; }
```
